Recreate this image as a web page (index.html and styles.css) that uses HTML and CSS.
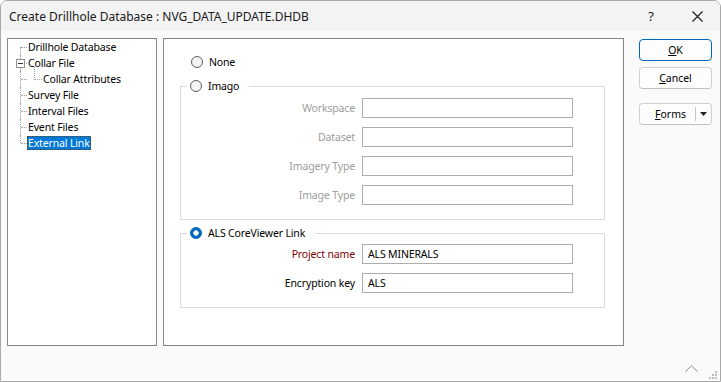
FILE: index.html
```html
<!DOCTYPE html>
<html>
<head>
    <meta name="viewport" content="width=device-width, initial-scale=1">
    <title>Create Drillhole Database</title>
    <link rel="stylesheet" href="styles.css">
</head>
<body>
    <div class="window">
        <div class="titlebar">
            <span class="title">Create Drillhole Database : NVG_DATA_UPDATE.DHDB</span>
            <span class="caption-btn">?</span>
            <span class="caption-btn">
                <svg width="11" height="11" viewBox="0 0 11 11"><path d="M0.5 0.5 L10.5 10.5 M10.5 0.5 L0.5 10.5" stroke="#1a1a1a" stroke-width="1.1" fill="none"/></svg>
            </span>
        </div>

        <div class="main">
            <div class="tree">
                <div class="tree-row first"><span class="tree-label">Drillhole Database</span></div>
                <div class="tree-row"><span class="toggle"><span class="minus"></span></span><span class="tree-label">Collar File</span></div>
                <div class="tree-row child"><span class="branch"></span><span class="tree-label">Collar Attributes</span></div>
                <div class="tree-row"><span class="tree-label">Survey File</span></div>
                <div class="tree-row"><span class="tree-label">Interval Files</span></div>
                <div class="tree-row"><span class="tree-label">Event Files</span></div>
                <div class="tree-row last"><span class="tree-label selected">External Link</span></div>
            </div>

            <div class="panel">
                <div class="option"><span class="radio"></span>None</div>

                <fieldset class="group">
                    <legend><span class="legend-option"><span class="radio"></span>Imago</span></legend>
                    <div class="fields">
                        <span class="field-label disabled">Workspace</span>
                        <span class="input"></span>
                        <span class="field-label disabled">Dataset</span>
                        <span class="input"></span>
                        <span class="field-label disabled">Imagery Type</span>
                        <span class="input"></span>
                        <span class="field-label disabled">Image Type</span>
                        <span class="input"></span>
                    </div>
                </fieldset>

                <fieldset class="group als">
                    <legend><span class="legend-option"><span class="radio checked"></span>ALS CoreViewer Link</span></legend>
                    <div class="fields">
                        <span class="field-label required">Project name</span>
                        <span class="input">ALS MINERALS</span>
                        <span class="field-label">Encryption key</span>
                        <span class="input">ALS</span>
                    </div>
                </fieldset>
            </div>

            <div class="actions">
                <button class="btn default"><span><u>O</u>K</span></button>
                <button class="btn"><span><u>C</u>ancel</span></button>
                <button class="btn split">
                    <span class="split-text"><u>F</u>orms</span>
                    <span class="split-arrow">
                        <svg width="7" height="4" viewBox="0 0 7 4"><path d="M0 0 H7 L3.5 4 Z" fill="#222"/></svg>
                    </span>
                </button>
            </div>
        </div>

        <div class="footer">
            <svg class="chevron" width="13" height="7" viewBox="0 0 13 7"><path d="M0.5 6.5 L6.5 0.8 L12.5 6.5" stroke="#8c8c8c" stroke-width="1" fill="none"/></svg>
            <svg class="grip" width="9" height="9" viewBox="0 0 9 9">
                <rect x="7" y="1" width="2" height="2" fill="#bdbdbd"/>
                <rect x="4" y="4" width="2" height="2" fill="#bdbdbd"/>
                <rect x="7" y="4" width="2" height="2" fill="#bdbdbd"/>
                <rect x="1" y="7" width="2" height="2" fill="#bdbdbd"/>
                <rect x="4" y="7" width="2" height="2" fill="#bdbdbd"/>
                <rect x="7" y="7" width="2" height="2" fill="#bdbdbd"/>
            </svg>
        </div>
    </div>
</body>
</html>
```

FILE: styles.css
```css
body {
    margin: 0;
    background: #fff;
    color: #000;
    font-family: "Noto Sans", "Open Sans", sans-serif;
    font-size: 10.5px;
    letter-spacing: -0.15px;
}

.window {
    width: 721px;
    height: 382px;
    box-sizing: border-box;
    border: 1px solid #a8a8a8;
    border-radius: 7px 7px 0 0;
    background: #fafafa;
    display: flex;
    flex-direction: column;
    overflow: hidden;
}

/* --- title bar --- */
.titlebar {
    height: 30px;
    flex: none;
    display: flex;
    align-items: center;
    padding-left: 8px;
    background: #f3f3f3;
    font-size: 12px;
    letter-spacing: 0;
    color: #1a1a1a;
}

.title {
    flex: 1;
}

.caption-btn {
    width: 46px;
    height: 30px;
    display: flex;
    align-items: center;
    justify-content: center;
    font-size: 13px;
}

/* --- main area --- */
.main {
    display: flex;
    padding: 7px 0 0 6px;
}

.tree {
    width: 150px;
    height: 308px;
    box-sizing: border-box;
    border: 1px solid #828790;
    background: #fff;
}

.tree-row {
    position: relative;
    height: 16px;
    display: flex;
    align-items: center;
    padding-left: 19px;
    white-space: nowrap;
}

    .tree-row::before {
        content: "";
        position: absolute;
        left: 12px;
        top: 0;
        bottom: 0;
        border-left: 1px dotted #a0a0a0;
    }

    .tree-row::after {
        content: "";
        position: absolute;
        left: 13px;
        top: 8px;
        width: 6px;
        border-top: 1px dotted #a0a0a0;
    }

    .tree-row.first::before {
        top: 8px;
    }

    .tree-row.last::before {
        bottom: 8px;
    }

    .tree-row.child {
        padding-left: 34px;
    }

.branch {
    position: absolute;
    left: 26px;
    top: -4px;
    width: 7px;
    height: 12px;
    border-left: 1px dotted #a0a0a0;
    border-bottom: 1px dotted #a0a0a0;
}

.toggle {
    position: absolute;
    left: 8px;
    top: 4px;
    width: 9px;
    height: 9px;
    box-sizing: border-box;
    border: 1px solid #919191;
    background: #fff;
    z-index: 1;
    display: flex;
    align-items: center;
    justify-content: center;
}

.minus {
    width: 5px;
    height: 1px;
    background: #333;
}

.tree-label {
    padding: 0 1px;
    line-height: 14px;
}

    .tree-label.selected {
        background: #0078d7;
        color: #fff;
        outline: 1px dotted #5a4a2a;
        outline-offset: -1px;
    }

/* --- options panel --- */
.panel {
    width: 461px;
    height: 308px;
    margin-left: 6px;
    box-sizing: border-box;
    border: 1px solid #868686;
    background: #fff;
    padding: 15px 0 0 16px;
}

.option {
    display: flex;
    align-items: center;
    height: 16px;
    padding-left: 11px;
}

.radio {
    width: 12px;
    height: 12px;
    box-sizing: border-box;
    border: 1px solid #5f5f5f;
    border-radius: 50%;
    background: #f4f4f4;
    margin-right: 6px;
    flex: none;
}

    .radio.checked {
        border-color: #0067c0;
        background: radial-gradient(circle, #fff 0 2.4px, #0067c0 3px);
    }

.group {
    width: 425px;
    box-sizing: border-box;
    margin: 8px 0 0 0;
    padding: 4px 0 14px 0;
    border: 1px solid #dcdcdc;
    min-width: 0;
}

    .group.als {
        margin-top: 5px;
        padding-top: 3px;
    }

    .group legend {
        margin-left: 6px;
        padding: 0 10px 0 3px;
    }

.legend-option {
    display: flex;
    align-items: center;
    height: 16px;
}

.fields {
    display: grid;
    grid-template-columns: 174px 211px;
    column-gap: 7px;
    row-gap: 9px;
    align-items: center;
}

.field-label {
    text-align: right;
}

    .field-label.disabled {
        color: #9d9d9d;
    }

    .field-label.required {
        color: #800000;
    }

.input {
    height: 20px;
    box-sizing: border-box;
    border: 1px solid #adadad;
    background: #fff;
    padding: 0 5px;
    line-height: 18px;
}

/* --- buttons --- */
.actions {
    width: 73px;
    margin-left: 15px;
    padding-top: 1px;
    display: flex;
    flex-direction: column;
}

.btn {
    height: 22px;
    box-sizing: border-box;
    border: 1px solid #d0d0d0;
    border-bottom-color: #c2c2c2;
    border-radius: 4px;
    background: #fdfdfd;
    font: inherit;
    color: #000;
    padding: 0;
    margin: 0 0 6px 0;
    display: flex;
    align-items: center;
    justify-content: center;
}

    .btn.default {
        border-color: #0067c0;
    }

    .btn.split {
        margin-top: 8px;
        justify-content: flex-start;
    }

.split-text {
    flex: 1;
    text-align: center;
    padding-left: 6px;
}

.split-arrow {
    width: 15px;
    height: 14px;
    border-left: 1px solid #c8c8c8;
    display: flex;
    align-items: center;
    justify-content: center;
}

/* --- bottom strip --- */
.footer {
    flex: 1;
    display: flex;
    justify-content: flex-end;
    align-items: flex-end;
    padding: 0 3px 2px 0;
}

.chevron {
    margin: 0 10px 7px 0;
}
```
